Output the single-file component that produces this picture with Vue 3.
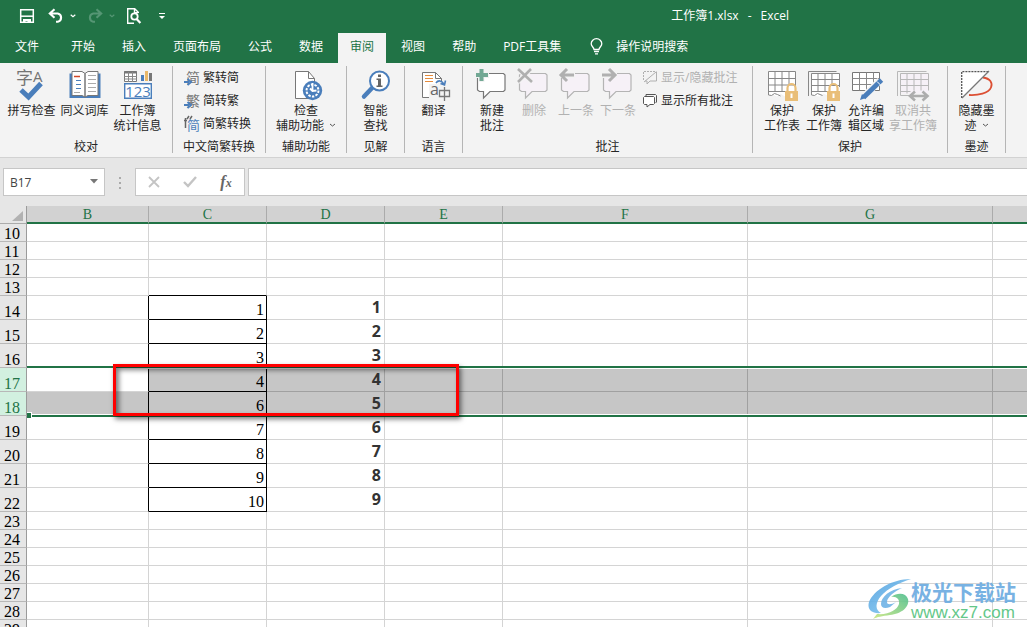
<script setup>
import { ref } from 'vue'

const tabs = ['文件', '开始', '插入', '页面布局', '公式', '数据', '审阅', '视图', '帮助', 'PDF工具集']
const activeTab = ref('审阅')
const cellName = ref('B17')
const formula = ref('')

const columns = ['B', 'C', 'D', 'E', 'F', 'G', '']
const listed = { 14: [1, 1], 15: [2, 2], 16: [3, 3], 17: [4, 4], 18: [6, 5], 19: [7, 6], 20: [8, 7], 21: [9, 8], 22: [10, 9] }
const rows = Array.from({ length: 20 }, (_, i) => {
  const n = i + 10
  return { n, values: listed[n], picked: n === 17 || n === 18 }
})

function cellText(row, col) {
  if (!row.values) return ''
  if (col === 'C') return row.values[0]
  if (col === 'D') return row.values[1]
  return ''
}

function cellClass(row, col) {
  return {
    plain: col === 'C',
    strong: col === 'D',
    boxed: col === 'C' && row.values,
    'edge-right': col === 'B' && row.values,
    'edge-bottom': col === 'C' && row.n === 13,
    shaded: row.picked && !(row.n === 17 && col === 'B'),
  }
}
</script>

<template>
  <div class="app">
    <header class="titlebar">
      <div class="quick">
        <button class="q-save" aria-label="保存">
          <svg width="16" height="16" viewBox="0 0 16 16"><path d="M1.700 1.700h12.600v12.600H1.700z" fill="none" stroke="#fff" stroke-width="1.500" /><path d="M2 8.200h12" stroke="#fff" stroke-width="1.500" /><path d="M4 11h8v4H8.500v-2h-2v2H4z" fill="#fff" /></svg>
        </button>
        <button class="q-undo" aria-label="撤消">
          <svg width="16" height="16" viewBox="0 0 16 16"><path d="M6.500 1.200 1.800 5.500l4.700 4.200M2.200 5.500h7.600a4.200 4.200 0 0 1 0 8.200H8" fill="none" stroke="#fff" stroke-width="2.100" /></svg>
          <svg width="6" height="4" viewBox="0 0 6 4"><path d="m.7.7 2.300 2 2.300-2" fill="none" stroke="#fff" stroke-width="1.200" /></svg>
        </button>
        <button class="q-redo" aria-label="恢复" disabled>
          <svg width="16" height="16" viewBox="0 0 16 16"><path d="m9.500 1.200 4.700 4.300-4.700 4.200M13.800 5.500H6.200a4.200 4.200 0 0 0 0 8.200H8" fill="none" stroke="#559674" stroke-width="2.100" /></svg>
          <svg width="6" height="4" viewBox="0 0 6 4"><path d="m.7.7 2.300 2 2.300-2" fill="none" stroke="#559674" stroke-width="1.200" /></svg>
        </button>
        <button class="q-preview" aria-label="打印预览">
          <svg width="16" height="18" viewBox="0 0 16 18"><path d="M8 16.300H1.700V1.700h7l3.600 3.600V6M8.500 2v3.600h3.800" fill="none" stroke="#fff" stroke-width="1.400" /><circle cx="8.500" cy="9.500" r="3.200" fill="none" stroke="#fff" stroke-width="1.800" /><path d="m10.600 12 3.800 4" stroke="#fff" stroke-width="2.200" /></svg>
        </button>
        <button class="q-more" aria-label="自定义快速访问工具栏">
          <svg width="6" height="8" viewBox="0 0 6 8"><path d="M0 1.500h6" stroke="#fff" /><path d="M0 4h6L3 7z" fill="#fff" /></svg>
        </button>
      </div>
      <div class="title"><span>工作簿1.xlsx</span><span>-</span><span>Excel</span></div>
    </header>

    <nav class="tabs">
      <button v-for="tab in tabs" :key="tab" class="tab" :class="{ active: tab === activeTab, file: tab === '文件' }" @click="activeTab = tab">{{ tab }}</button>
      <button class="tell">
        <svg width="13" height="17" viewBox="0 0 13 17"><path d="M4 11.500C4 9.300 1.200 8.500 1.200 5.700a5.300 5 0 0 1 10.600 0C11.800 8.500 9 9.300 9 11.500z" fill="none" stroke="#fff" stroke-width="1.300" /><path d="M4 13.500h5M5 15.800h3" stroke="#fff" stroke-width="1.300" /></svg>
        <span>操作说明搜索</span>
      </button>
    </nav>

    <section class="ribbon">
      <div class="group g-proof">
        <div class="tools">
          <button class="big">
            <svg width="32" height="32" viewBox="0 0 32 32"><text x="0" y="15" font-size="17" class="cjk" fill="#737373">字</text><text x="17" y="13" font-size="15" class="lat" fill="#737373">A</text><path d="m5 21 7.500 7L25 14.500" fill="none" stroke="#4a7ebb" stroke-width="5" /></svg>
            <span>拼写检查</span>
          </button>
          <button class="big">
            <svg width="32" height="32" viewBox="0 0 32 32"><path d="M.5 4.500h31V29h-31z" fill="#4a7ebb" /><path d="M3 2.500h10l3 2 3-2h10v24H19l-3 1.500-3-1.500H3z" fill="#fff" stroke="#777" /><path d="M16 4.500V28" stroke="#777" stroke-width="1.500" /><path d="M5 7.500h6" stroke="#d24726" stroke-width="1.500" /><path d="M7 11.500h5M7 15.500h5M7 19.500h5" stroke="#4a7ebb" /><path d="M5 23.500h6M19 6.500h8M19 10.500h8M19 14.500h8M19 18.500h8M19 22.500h8" stroke="#aaa" /></svg>
            <span>同义词库</span>
          </button>
          <button class="big">
            <svg width="32" height="32" viewBox="0 0 32 32"><path d="M2.500 2.500h12v10h-12z" fill="#fff" stroke="#777" /><path d="M2 3.500h13" stroke="#777" stroke-width="2" /><path d="M2 7.500h13M2 10h13M6.500 3v10M10.500 3v10" stroke="#888" /><path d="M19 6h3v6h-3z" fill="#4a7ebb" /><path d="M23 2h3v10h-3z" fill="#e9b869" /><path d="M27 4h3v8h-3z" fill="#777" /><path d="M2.700 14.700h26.600v14.600H2.700z" fill="#fff" stroke="#4a7ebb" stroke-width="1.400" /><text x="16" y="27.500" font-size="15" text-anchor="middle" class="lat" fill="#4a7ebb">123</text></svg>
            <span>工作簿<br>统计信息</span>
          </button>
        </div>
        <p class="caption">校对</p>
      </div>

      <div class="group g-chinese">
        <div class="stack">
          <button class="small">
            <svg width="16" height="16" viewBox="0 0 16 16"><text x="2" y="13" font-size="14" class="cjk" fill="#777">简</text><path d="M0 12h5M3.500 9l3.500 3-3.500 3" fill="none" stroke="#4a7ebb" stroke-width="2" /></svg>
            <span>繁转简</span>
          </button>
          <button class="small">
            <svg width="16" height="16" viewBox="0 0 16 16"><text x="2" y="13" font-size="14" class="cjk" fill="#777">繁</text><path d="M0 12h5M3.500 9l3.500 3-3.500 3" fill="none" stroke="#4a7ebb" stroke-width="2" /></svg>
            <span>简转繁</span>
          </button>
          <button class="small">
            <svg width="16" height="16" viewBox="0 0 16 16"><path d="M0 4.500h3M1.500 2v10M5 0 3 3M8 0 6 3" stroke="#666" stroke-width="1.500" /><text x="3" y="14" font-size="13" class="cjk" fill="#4a7ebb">简</text></svg>
            <span>简繁转换</span>
          </button>
        </div>
        <p class="caption">中文简繁转换</p>
      </div>

      <div class="group g-access">
        <div class="tools">
          <button class="big">
            <svg width="32" height="32" viewBox="0 0 32 32"><path d="M5.500 2.500h13l6 7v20h-19z" fill="#fff" stroke="#777" /><path d="M18.500 2.500v7h6" fill="none" stroke="#777" /><circle cx="22.500" cy="21.500" r="9.700" fill="#4a7ebb" /><circle cx="22.500" cy="21.500" r="6" fill="none" stroke="#fff" stroke-width="2" stroke-dasharray="2.400 1.300" /><path d="M22.500 14v7M20 19.500l2.500 2.500 4-.5" fill="none" stroke="#fff" stroke-width="1.800" /></svg>
            <span>检查<br>辅助功能<svg class="chev" width="7" height="5" viewBox="0 0 7 5"><path d="m1 1 2.500 2L6 1" fill="none" stroke="#555" /></svg></span>
          </button>
        </div>
        <p class="caption">辅助功能</p>
      </div>

      <div class="group g-insight">
        <div class="tools">
          <button class="big">
            <svg width="32" height="32" viewBox="0 0 32 32"><path d="m13 18-9 9.500" stroke="#4a7ebb" stroke-width="4.500" stroke-linecap="round" /><circle cx="19.500" cy="12" r="9.500" fill="#fff" stroke="#4a7ebb" stroke-width="2" /><path d="M18 5.500h3v2.500h-3zM16.500 9.500H21v7h1.500V18h-6v-1.500H18V11h-1.500z" fill="#666" /></svg>
            <span>智能<br>查找</span>
          </button>
        </div>
        <p class="caption">见解</p>
      </div>

      <div class="group g-lang">
        <div class="tools">
          <button class="big">
            <svg width="32" height="32" viewBox="0 0 32 32"><path d="M4.500 3.500h13l6 6v19h-19z" fill="#fff" stroke="#777" /><path d="M17.500 3.500v6h6" fill="none" stroke="#777" /><path d="M11 15h13v15H11zM20 12h5v18h-5z" fill="#f3f3f3" /><path d="M7 6.500h8M7 9.500h8M7 12.500h8" stroke="#e58b3c" /><text x="12" y="26" font-size="16" class="lat" fill="#666">a</text><path d="M21.500 21.500h10v6h-10zM26.500 18v14" fill="none" stroke="#777" stroke-width="1.300" /><path d="M18 14c2-3 6-3 8 1.500M22.500 14.500l4 1.500 1-4.500" fill="none" stroke="#4a7ebb" stroke-width="1.600" /></svg>
            <span>翻译</span>
          </button>
        </div>
        <p class="caption">语言</p>
      </div>

      <div class="group g-comment">
        <div class="tools">
          <button class="big narrow">
            <svg width="32" height="32" viewBox="0 0 32 32"><path d="M3.500 4.500h24L29 6v15l-1.500 1.500H14L7.500 29v-6.500h-4L1.500 21V6z" fill="#fff" stroke="#777" stroke-width="1.200" /><path d="M5.500 0v13M0 6h13" stroke="#f3f3f3" stroke-width="6" /><path d="M5.500 0v12M0 6h12" stroke="#72a894" stroke-width="4" /></svg>
            <span>新建<br>批注</span>
          </button>
          <button class="big narrow" disabled>
            <svg width="32" height="32" viewBox="0 0 32 32"><path d="M3.500 4.500h24L29 6v15l-1.500 1.500H14L7.500 29v-6.500h-4L1.500 21V6z" fill="#f6f1f7" stroke="#b4b4b4" stroke-width="1.200" /><path d="m0 0 14 13M13 0 0 13" stroke="#f3f3f3" stroke-width="5" /><path d="m0 0 14 13M13 0 0 13" stroke="#b0b0b0" stroke-width="2.600" /></svg>
            <span>删除</span>
          </button>
          <button class="big narrow" disabled>
            <svg width="32" height="32" viewBox="0 0 32 32"><path d="M3.500 4.500h24L29 6v15l-1.500 1.500H14L7.500 29v-6.500h-4L1.500 21V6z" fill="#f6f1f7" stroke="#b4b4b4" stroke-width="1.200" /><path d="M0 6h15" stroke="#f3f3f3" stroke-width="6" /><path d="M1 6h13M7 0 1 6l6 6" fill="none" stroke="#b0b0b0" stroke-width="3" /></svg>
            <span>上一条</span>
          </button>
          <button class="big narrow" disabled>
            <svg width="32" height="32" viewBox="0 0 32 32"><path d="M3.500 4.500h24L29 6v15l-1.500 1.500H14L7.500 29v-6.500h-4L1.500 21V6z" fill="#f6f1f7" stroke="#b4b4b4" stroke-width="1.200" /><path d="M0 6h15" stroke="#f3f3f3" stroke-width="6" /><path d="M0 6h13M7 0l6 6-6 6" fill="none" stroke="#b0b0b0" stroke-width="3" /></svg>
            <span>下一条</span>
          </button>
          <div class="stack side">
            <button class="small" disabled>
              <svg width="16" height="16" viewBox="0 0 16 16"><path d="M.5 10V1.500h13" fill="none" stroke="#b0b0b0" stroke-dasharray="2 1" /><path d="M13.500 2v9H7l-3 3v-3H2" fill="none" stroke="#b0b0b0" /><path d="M13 2 1 12" stroke="#b0b0b0" /></svg>
              <span>显示/隐藏批注</span>
            </button>
            <button class="small">
              <svg width="16" height="16" viewBox="0 0 16 16"><path d="M3 3V1.500h9.500l1 1V9l-1 1" fill="none" stroke="#555" /><path d="M1.500 3.500h9l1 1v6l-1 1H7L4 14v-2.500H1.500l-1-1v-6z" fill="#fff" stroke="#555" /></svg>
              <span>显示所有批注</span>
            </button>
          </div>
        </div>
        <p class="caption">批注</p>
      </div>

      <div class="group g-protect">
        <div class="tools">
          <button class="big narrow">
            <svg width="32" height="32" viewBox="0 0 32 32"><path d="M2.500 2.500h27v21l-9 5-6-4-4 3-3-2-5 1z" fill="#fff" /><path d="M20 22.500H2.500v-20h27V18M2.500 9.500h27M2.500 16h27M9 2.500v20M16 2.500v20M23 2.500V16M2.500 22v4l3 .5 3-2 3 1 3 1.500" fill="none" stroke="#888" /><path d="M21.500 23v-4a4 4 0 0 1 8 0v4" fill="none" stroke="#e9be78" stroke-width="2.200" /><path d="M19 22h13v10H19z" fill="#e9be78" /><path d="M25.500 24.500v4.500" stroke="#fff" stroke-width="2" /></svg>
            <span>保护<br>工作表</span>
          </button>
          <button class="big narrow">
            <svg width="32" height="32" viewBox="0 0 32 32"><path d="M.5 27V2.500h28" fill="none" stroke="#888" /><path d="M3.500 4.500h28v19l-10 4-6-3-4 3-8-1z" fill="#fff" /><path d="M20 22.500H3.500v-18h28V18M3.500 10.500h28M3.500 16.500h28M10 4.500v18M17 4.500v18M24 4.500V16M3.500 22v4l3 .5 3-2 5 2" fill="none" stroke="#888" /><path d="M21.500 23v-4a4 4 0 0 1 8 0v4" fill="none" stroke="#e9be78" stroke-width="2.200" /><path d="M19 22h13v10H19z" fill="#e9be78" /><path d="M25.500 24.500v4.500" stroke="#fff" stroke-width="2" /></svg>
            <span>保护<br>工作簿</span>
          </button>
          <button class="big narrow">
            <svg width="32" height="32" viewBox="0 0 32 32"><path d="M2.500 3.500h27v18h-27z" fill="#fff" stroke="#777" /><path d="M2.500 9.500h27M2.500 15.500h27M9.500 3.500v18M16.500 3.500v18M23.500 3.500v18" fill="none" stroke="#888" /><path d="M30 11.500 13 28.500" stroke="#f3f3f3" stroke-width="7" /><path d="M31.500 11 13.500 28.500" stroke="#4a7ebb" stroke-width="4.800" /><path d="m12 25 4 4-6 2z" fill="#4a7ebb" /><path d="m27 12.500 3.500 3.500" stroke="#fff" /></svg>
            <span>允许编<br>辑区域</span>
          </button>
          <button class="big wide" disabled>
            <svg width="32" height="32" viewBox="0 0 32 32"><path d="M.5 27V2.500h29" fill="none" stroke="#b8b8b8" /><path d="M3.500 4.500h28v20h-28z" fill="#f6f1f7" /><path d="M12 26.500H3.500v-22h28v17M3.500 10.500h28M3.500 16.500h28M3.500 22.500h10M10 4.500v20M17 4.500v17M24 4.500v17" fill="none" stroke="#b8b8b8" /><path d="M13 27h17M18 22.500 13 27l5 4.500M25.500 22.500l5 4.500-5 4.500" fill="none" stroke="#adadad" stroke-width="2.600" /></svg>
            <span>取消共<br>享工作簿</span>
          </button>
        </div>
        <p class="caption">保护</p>
      </div>

      <div class="group g-ink">
        <div class="tools">
          <button class="big">
            <svg width="32" height="32" viewBox="0 0 32 32"><path d="M.7 2.700h26L.7 28.700z" fill="#fff" /><path d="M.7 29V2.700h27" fill="none" stroke="#555" stroke-width="1.300" stroke-dasharray="2 1" /><path d="M22 8.500c7 1 10 5 8 10-2.500 6-13 8-22 7.500" fill="none" stroke="#dc4f33" stroke-width="1.800" /><path d="M28 2 1 29" stroke="#777" stroke-width="1.300" /></svg>
            <span>隐藏墨<br>迹<svg class="chev" width="7" height="5" viewBox="0 0 7 5"><path d="m1 1 2.500 2L6 1" fill="none" stroke="#555" /></svg></span>
          </button>
        </div>
        <p class="caption">墨迹</p>
      </div>
    </section>

    <section class="formula-bar">
      <div class="name-box">
        <input v-model="cellName" aria-label="名称框">
        <button aria-label="名称列表"><svg width="8" height="5" viewBox="0 0 8 5"><path d="M0 0h8L4 4.500z" fill="#777" /></svg></button>
      </div>
      <svg class="dots" width="2" height="12" viewBox="0 0 2 12"><path d="M0 0h2v2H0zM0 5h2v2H0zM0 10h2v2H0z" fill="#aaa" /></svg>
      <div class="fx">
        <button aria-label="取消"><svg width="12" height="12" viewBox="0 0 12 12"><path d="m1 1 10 10M11 1 1 11" stroke="#c4c4c4" stroke-width="1.800" /></svg></button>
        <button aria-label="输入"><svg width="14" height="12" viewBox="0 0 14 12"><path d="m1 6 4 4 8-9" fill="none" stroke="#c4c4c4" stroke-width="2.400" /></svg></button>
        <button class="fn" aria-label="插入函数">f<small>x</small></button>
      </div>
      <input v-model="formula" class="formula" aria-label="编辑栏">
    </section>

    <main class="sheet">
      <table>
        <colgroup>
          <col class="c-head"><col class="c-b"><col class="c-m"><col class="c-m"><col class="c-m"><col class="c-l"><col class="c-l"><col>
        </colgroup>
        <thead>
          <tr>
            <th class="corner"><svg width="11" height="10" viewBox="0 0 11 10"><path d="M11 0v10H0z" fill="#b2b2b2" /></svg></th>
            <th v-for="(col, i) in columns" :key="i" scope="col">{{ col }}</th>
          </tr>
        </thead>
        <tbody>
          <tr v-for="row in rows" :key="row.n" :class="{ tall: row.values, picked: row.picked }">
            <th scope="row">{{ row.n }}</th>
            <td v-for="(col, i) in columns" :key="i" :class="cellClass(row, col)">{{ cellText(row, col) }}</td>
          </tr>
        </tbody>
      </table>
      <div class="selection"><i class="handle"></i></div>
      <div class="marker"></div>
      <div class="watermark">
        <svg width="43" height="42" viewBox="0 0 43 42">
          <defs>
            <linearGradient id="wave" x1="0" y1="0" x2="1" y2="1"><stop offset="0" stop-color="#4f9fe0" /><stop offset="1" stop-color="#8fd0f2" /></linearGradient>
            <linearGradient id="leaf" x1="1" y1="0" x2="0" y2="1"><stop offset="0" stop-color="#4fbf8e" /><stop offset="1" stop-color="#cbe67f" /></linearGradient>
          </defs>
          <path d="M43 0C24 0 6 11 1 23c-2 7 2 12 12 11-6-3-6-10 0-17C20 9 31 4 43 0z" fill="url(#wave)" />
          <path d="M34 9c-12 1-21 9-21 16 0 4 4 5 9 3l6-5c-5 3-9 3-9 0 0-5 8-11 15-14z" fill="#6fb3e6" />
          <path d="M23 18c7-5 15-4 17 2 2 8-7 15-18 16-8 1-13 2-17 4l4-5c12 1 20-4 22-10 1-5-3-8-8-7z" fill="url(#leaf)" />
        </svg>
        <div><strong>极光下载站</strong><span>www.xz7.com</span></div>
      </div>
    </main>
  </div>
</template>

<style>
body { margin: 0; }
</style>

<style scoped>
* { box-sizing: border-box; }
.app { height: 100vh; display: flex; flex-direction: column; overflow: hidden; background: #fff; color: #262626; font: 12px/15px "Open Sans", "Noto Sans CJK SC", sans-serif; }
button, input { font: inherit; color: inherit; border: 0; padding: 0; margin: 0; background: none; }
svg { display: block; flex: none; overflow: visible; }
.cjk { font-family: "Noto Sans CJK SC", sans-serif; }
.lat { font-family: "Open Sans", sans-serif; }

.titlebar { height: 33px; flex: none; display: flex; align-items: center; justify-content: space-between; padding-bottom: 2px; background: #217346; color: #fff; }
.quick { display: flex; align-items: center; padding-left: 19px; }
.quick button { display: flex; align-items: center; }
.q-undo { margin-left: 13px; gap: 6px; }
.q-redo { margin-left: 11px; gap: 6px; }
.q-preview { margin-left: 11px; }
.q-more { margin-left: 17px; }
.title { display: flex; gap: 9px; margin-right: 238px; }

.tabs { height: 30px; flex: none; display: flex; gap: 3px; padding-left: 3px; background: #217346; color: #fff; }
.tab { padding: 0 12px 3px; white-space: nowrap; }
.file { margin-right: 5px; }
.active { background: #f3f3f3; color: #217346; }
.tell { display: flex; align-items: center; gap: 13px; padding: 0 14px 3px; }

.ribbon { height: 95px; flex: none; display: flex; padding: 3px 0 4px; background: #f3f3f3; border-bottom: 1px solid #d2d2d2; }
.group { flex: none; display: flex; flex-direction: column; justify-content: space-between; border-right: 1px solid #b5b5b5; }
.g-proof { width: 173px; }
.g-chinese { width: 93px; }
.g-access { width: 81px; }
.g-insight, .g-lang, .g-ink { width: 58px; }
.g-comment { width: 290px; }
.g-protect { width: 195px; }
.tools { display: flex; justify-content: center; }
.g-proof .tools { justify-content: flex-start; padding-left: 5px; }
.g-comment .tools, .g-protect .tools { justify-content: flex-start; padding-left: 8px; }
.caption { margin: 0; line-height: 13px; text-align: center; white-space: nowrap; }
.big { width: 53px; display: flex; flex-direction: column; align-items: center; gap: 2px; padding-top: 3px; white-space: nowrap; }
.g-access .big { width: 66px; }
.narrow { width: 42px; }
.wide { width: 52px; }
.chev { display: inline-block; margin: 0 0 2px 5px; }
.stack { display: flex; flex-direction: column; padding-left: 11px; }
.side { padding-left: 4px; }
.small { height: 23px; display: flex; align-items: center; gap: 3px; white-space: nowrap; }
.side .small { gap: 2px; }
button:disabled { color: #b1b1b1; }

.formula-bar { height: 48px; flex: none; display: flex; align-items: flex-start; padding: 10px 0 0 3px; background: #e6e6e6; }
.name-box, .fx, .formula { height: 28px; background: #fff; border: 1px solid #c6c6c6; }
.name-box { width: 102px; display: flex; align-items: center; }
.name-box input { flex: 1; min-width: 0; padding-left: 6px; color: #444; }
.name-box button { width: 18px; height: 26px; padding: 0 0 2px 4px; }
.dots { margin: 9px 14px 0 14px; }
.fx { width: 110px; display: flex; align-items: center; justify-content: space-around; margin-right: 3px; }
.fx button { width: 36px; display: flex; justify-content: center; }
.fx .fn { align-items: baseline; font: italic bold 16px/20px "Liberation Serif", serif; color: #666; }
.fn small { font-size: 12px; }
.formula { flex: 1; min-width: 0; padding: 0 6px; border-right: 0; }

.sheet { position: relative; flex: 1; min-height: 0; overflow: hidden; }
table { width: 100%; table-layout: fixed; border-collapse: separate; border-spacing: 0; font: 16px/14px "Liberation Serif", "Noto Sans CJK SC", serif; color: #000; }
.c-head { width: 27px; }
.c-b { width: 122px; }
.c-m { width: 118px; }
.c-l { width: 245px; }
th, td { height: 18px; padding: 0; border-right: 1px solid #d4d4d4; border-bottom: 1px solid #d4d4d4; font-weight: normal; }
thead th { background: #d2d2d2; border-right-color: #ababab; border-bottom: 2px solid #217346; padding-top: 2px; color: #217346; font-size: 14px; }
thead .corner { background: #e6e6e6; border-bottom: 1px solid #ababab; border-right-color: #9b9b9b; }
.corner svg { margin-left: 12px; }
tbody th { background: #e6e6e6; border-right-color: #9b9b9b; border-bottom-color: #b8b8b8; text-align: left; padding-left: 4px; vertical-align: bottom; }
.tall th, .tall td { height: 24px; }
.picked th { background: #d2f0e0; color: #217346; }
td.plain { text-align: right; vertical-align: bottom; padding: 0 2px 2px 0; }
td.strong { text-align: right; padding: 0 3px 2px 0; font: bold 16px/16px "Open Sans", sans-serif; color: #333; }
td.shaded { background: #c6c6c6; border-color: #a0a0a0; }
td.edge-right { border-right-color: #000; }
td.edge-bottom { border-bottom-color: #000; }
td.boxed { border-color: #000; }
th:last-child, td:last-child { border-right: 0; }

.selection { position: absolute; top: 160px; left: 27px; right: 0; height: 51px; border: solid #217346; border-width: 2px 0; box-shadow: inset 0 1px #fff, inset 0 -1px #fff; }
.handle { position: absolute; left: 0; bottom: -3px; width: 5px; height: 6px; background: #217346; border: solid #fff; border-width: 1px 1px 0 0; }
.marker { position: absolute; top: 158px; left: 113px; width: 346px; height: 52px; border: 3px solid #f00; box-shadow: 2px 3px 5px rgba(0, 0, 0, .55), inset 3px 3px 5px rgba(0, 0, 0, .5); }
.watermark { position: absolute; right: 11px; bottom: 5px; display: flex; align-items: center; opacity: .9; }
.watermark div { display: flex; flex-direction: column; }
.watermark strong { font: bold 21px/26px "Noto Sans CJK SC", sans-serif; color: #6aaae0; }
.watermark span { font: 17px/18px "Liberation Sans", sans-serif; color: #53c27c; }
</style>
